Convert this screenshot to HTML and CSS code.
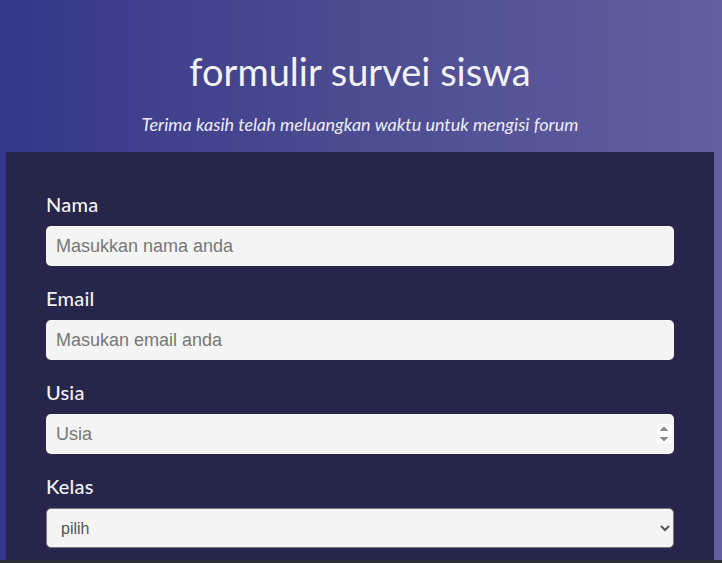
FILE: index.html
```html
<!DOCTYPE html>
<html lang="id">
<head>
<meta charset="utf-8">
<title>formulir survei siswa</title>
<link rel="stylesheet" href="styles.css">
</head>
<body>
<div class="page">
  <header class="header">
    <h1 class="title">formulir survei siswa</h1>
    <p class="subtitle">Terima kasih telah meluangkan waktu untuk mengisi forum</p>
  </header>
  <form class="panel">
    <div class="group">
      <label class="label" for="nama">Nama</label>
      <input class="field" id="nama" type="text" placeholder="Masukkan nama anda">
    </div>
    <div class="group">
      <label class="label" for="email">Email</label>
      <input class="field" id="email" type="email" placeholder="Masukan email anda">
    </div>
    <div class="group">
      <label class="label" for="usia">Usia</label>
      <input class="field field-number" id="usia" type="number" placeholder="Usia">
    </div>
    <div class="group">
      <label class="label" for="kelas">Kelas</label>
      <select class="select" id="kelas">
        <option>pilih</option>
        <option>X</option>
        <option>XI</option>
        <option>XII</option>
      </select>
    </div>
  </form>
</div>
<div class="bottom-bar"></div>
</body>
</html>
```

FILE: styles.css
```css
html, body {
  margin: 0;
  padding: 0;
}

body {
  font-family: Lato, "Noto Sans", sans-serif;
  background: linear-gradient(90deg, #36368a 0%, #4a4a90 45%, #625f9f 100%);
  min-height: 100vh;
  color: #f2f2f2;
}

.page {
  padding: 0 8px 0 6px;
}

.header {
  text-align: center;
  padding-top: 49px;
  padding-bottom: 17px;
}

.title {
  margin: 0;
  font-size: 38px;
  font-weight: 400;
  line-height: 44px;
  color: #f3f3f3;
}

.subtitle {
  margin: 20px 0 0;
  font-size: 18px;
  font-style: italic;
  font-weight: 400;
  line-height: 22px;
  color: #ececf4;
}

.panel {
  background: #26264a;
  padding: 40px 40px 40px;
  display: flex;
  flex-direction: column;
  gap: 20px;
}

.group {
  display: flex;
  flex-direction: column;
  gap: 10px;
}

.label {
  font-size: 20px;
  line-height: 24px;
  font-weight: 500;
  color: #f1f1f1;
  letter-spacing: 0.2px;
}

.field {
  box-sizing: border-box;
  height: 40px;
  width: 100%;
  border: none;
  border-radius: 5px;
  background: #f4f4f4;
  padding: 0 10px;
  font-family: "Liberation Sans", Arial, sans-serif;
  font-size: 18px;
  color: #333;
  outline: none;
}

.field::placeholder {
  color: #777;
}

.field-number {
  padding-right: 2px;
}

.field-number::-webkit-inner-spin-button {
  opacity: 1;
  height: 20px;
}

.select {
  box-sizing: border-box;
  height: 40px;
  width: 100%;
  border: 1px solid #767676;
  border-radius: 5px;
  background-color: #f4f4f4;
  padding: 0 10px;
  font-family: "Liberation Sans", Arial, sans-serif;
  font-size: 16px;
  color: #555;
}

.bottom-bar {
  position: fixed;
  left: 0;
  right: 0;
  bottom: 0;
  height: 3px;
  background: #2d3037;
}
```
